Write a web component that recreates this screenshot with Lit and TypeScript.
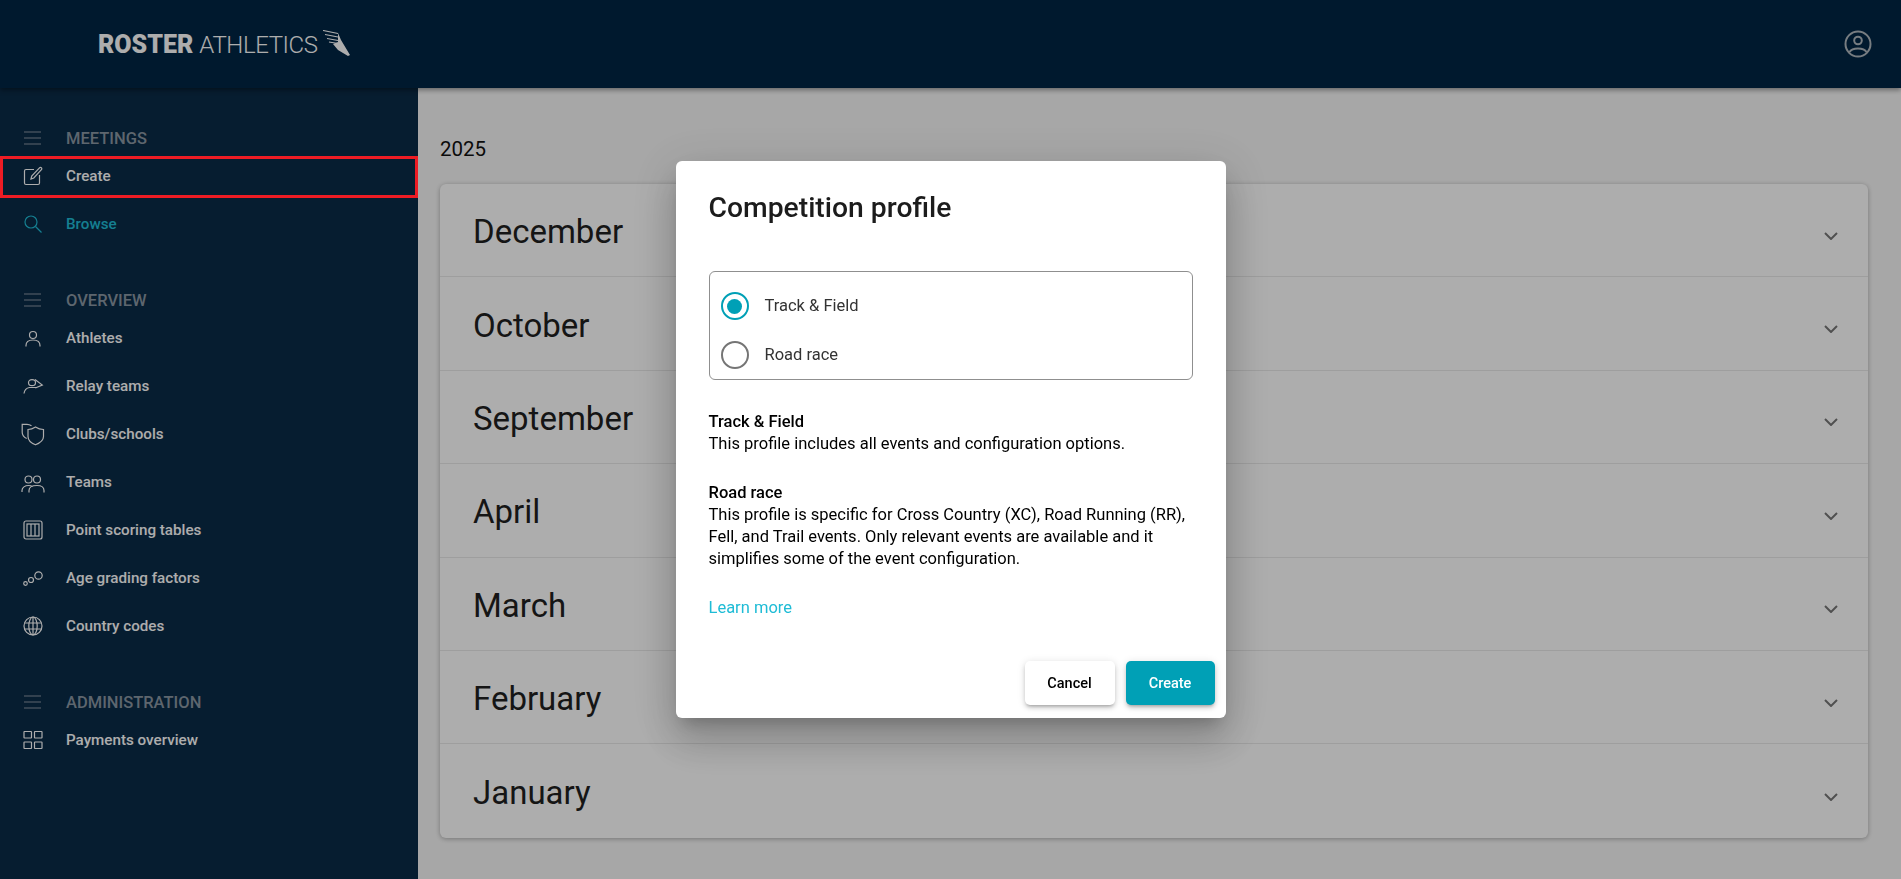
import { LitElement, html, css, svg } from 'lit';
import { customElement } from 'lit/decorators.js';

// nav icons, all on a 20x20 box with a thin stroke
const icons: Record<string, unknown> = {
  menu: svg`<path d="M1 4h17M1 10h17M1 16h17"/>`,
  create: svg`<path d="M11 3.500H3a1.500 1.500 0 0 0-1.500 1.500v12A1.500 1.500 0 0 0 3 18.500h12a1.500 1.500 0 0 0 1.500-1.500V9"/><path d="M8 13l.7-3L16.500 1.800a1.300 1.300 0 0 1 1.900 0 1.300 1.300 0 0 1 0 1.900L10.800 12z"/>`,
  search: svg`<circle cx="8" cy="8" r="6"/><path d="M12.500 12.500l6 6"/>`,
  athlete: svg`<circle cx="10" cy="7" r="3.500"/><path d="M3 18.500v-1c0-3.500 3-5.500 7-5.500s7 2 7 5.500v1"/>`,
  relay: svg`<ellipse cx="9" cy="6.700" rx="3.500" ry="3"/><path d="M12 3.500l7.300 5.500-7 3"/><path d="M1 17.500c.5-3.500 2.500-5.500 5.500-6h7"/>`,
  clubs: svg`<path d="M8.500 1.800C7 .8 5.500.3 4 .3H-.8v8c0 3 1.700 5 4.500 6.200"/><path d="M5 5.500c3 0 5-.8 7.500-2.500 2.500 1.700 4.500 2.500 8 2.500v7c0 3.500-3 6.300-8 8.300-5-2-7.500-4.800-7.500-8.300z"/>`,
  teams: svg`<circle cx="5.500" cy="7.500" r="3.500"/><circle cx="14" cy="7.500" r="3.500"/><path d="M-1 20v-1.500C-1 15.500 2 13.500 5.500 13.500c1.500 0 3 .3 4 1"/><path d="M6 20.500V18.500c0-3 3-5 8-5s7 2 7 5v2"/>`,
  scoring: svg`<rect x="1" y="1" width="18" height="18" rx="2"/><rect x="4" y="4" width="12" height="12"/><path d="M8 4v12M12 4v12"/>`,
  age: svg`<circle cx="2.500" cy="15.500" r="1.800"/><circle cx="8" cy="12" r="2.500"/><circle cx="15.500" cy="7.500" r="3.700"/>`,
  globe: svg`<circle cx="10" cy="10" r="9"/><ellipse cx="10" cy="10" rx="4.200" ry="9"/><path d="M10 1v18M1.500 7h17M1.500 13h17"/>`,
  payments: svg`<rect x="1" y="1.500" width="7.500" height="6.500" rx=".5"/><rect x="11.500" y="1.500" width="7.500" height="6.500" rx=".5"/><rect x="1" y="12" width="7.500" height="6.500" rx=".5"/><rect x="11.500" y="12" width="7.500" height="6.500" rx=".5"/>`,
};

const sections = [
  {
    title: 'MEETINGS',
    items: [
      { icon: 'create', label: 'Create' },
      { icon: 'search', label: 'Browse', active: true },
    ],
  },
  {
    title: 'OVERVIEW',
    items: [
      { icon: 'athlete', label: 'Athletes' },
      { icon: 'relay', label: 'Relay teams' },
      { icon: 'clubs', label: 'Clubs/schools' },
      { icon: 'teams', label: 'Teams' },
      { icon: 'scoring', label: 'Point scoring tables' },
      { icon: 'age', label: 'Age grading factors' },
      { icon: 'globe', label: 'Country codes' },
    ],
  },
  {
    title: 'ADMINISTRATION',
    items: [{ icon: 'payments', label: 'Payments overview' }],
  },
];

const months = ['December', 'October', 'September', 'April', 'March', 'February', 'January'];

@customElement('app-root')
export class AppRoot extends LitElement {
  static styles = css`
    :host {
      display: block;
      height: 100vh;
      overflow: hidden;
      font-family: Roboto, "Liberation Sans", sans-serif;
    }
    .page {
      height: 100%;
      display: flex;
      flex-direction: column;
      background: #f7f7f7;
    }
    .topbar {
      flex: 0 0 88px;
      display: flex;
      align-items: center;
      justify-content: space-between;
      padding: 0 29px 0 98px;
      background: #002544;
      box-shadow: 0 2px 5px rgba(0, 0, 0, 0.4);
      position: relative;
      z-index: 1;
    }
    .logo {
      display: flex;
      align-items: center;
      color: #fff;
      line-height: 28px;
    }
    .logo b {
      font-size: 25px;
      font-weight: 900;
      margin: 2px 6px 0 0;
    }
    .logo span {
      font-size: 24px;
      font-weight: 300;
      letter-spacing: -0.4px;
      margin-top: 2px;
    }
    .logo svg {
      width: 28px;
      height: 28px;
      margin-left: 5px;
      fill: #fff;
      stroke: #fff;
      stroke-width: 1.200;
    }
    .user {
      width: 28px;
      height: 28px;
      fill: none;
      stroke: #b0b8bf;
      stroke-width: 2;
    }
    .body {
      flex: 1;
      display: flex;
      min-height: 0;
    }
    .side {
      flex: 0 0 418px;
      background: #0a2b47;
      padding-top: 38px;
      display: flex;
      flex-direction: column;
      gap: 40px;
    }
    .head,
    .item {
      display: flex;
      align-items: center;
      gap: 23px;
      padding-left: 23px;
    }
    .head {
      height: 24px;
      margin-bottom: 2px;
      font-size: 16.500px;
      font-weight: 500;
      color: #8a97a3;
    }
    .item {
      height: 48px;
      font-size: 15.200px;
      font-weight: 500;
      color: #fff;
    }
    .item.active {
      color: #1fbcd6;
    }
    .ico {
      flex: 0 0 20px;
      width: 20px;
      height: 20px;
      overflow: visible;
      fill: none;
      stroke: currentColor;
      stroke-width: 1.200;
    }
    .main {
      flex: 1;
      padding: 49px 33px 0 22px;
      min-width: 0;
    }
    .year {
      font-size: 20.500px;
      line-height: 24px;
      color: #111;
      margin-bottom: 23px;
    }
    .months {
      background: #fff;
      border-radius: 6px;
      box-shadow: 0 1px 5px rgba(0, 0, 0, 0.3);
    }
    .month {
      height: 93.400px;
      box-sizing: border-box;
      display: flex;
      align-items: center;
      justify-content: space-between;
      padding: 3px 30px 0 33px;
      font-size: 33px;
      color: #1f1f1f;
      border-bottom: 1px solid #e9e9e9;
    }
    .month:last-child {
      border-bottom: 0;
    }
    .month svg {
      width: 14px;
      height: 8px;
      margin-top: 8px;
      fill: none;
      stroke: #777;
      stroke-width: 2;
    }
    .overlay {
      position: fixed;
      inset: 0;
      z-index: 2;
      display: flex;
      align-items: center;
      justify-content: center;
      background: rgba(0, 0, 0, 0.32);
    }
    .dialog {
      width: 550px;
      height: 557px;
      box-sizing: border-box;
      padding: 30px 11px 13px 33px;
      display: flex;
      flex-direction: column;
      background: #fff;
      border-radius: 6px;
      box-shadow: 0 11px 15px -7px rgba(0, 0, 0, 0.2), 0 24px 38px 3px rgba(0, 0, 0, 0.14), 0 9px 46px 8px rgba(0, 0, 0, 0.12);
      color: #000;
      font-size: 16.500px;
      line-height: 22px;
    }
    h2 {
      margin: 0 0 46px;
      font-size: 28.300px;
      line-height: 34px;
      font-weight: 500;
      color: #1c1c1c;
    }
    .choices {
      width: 484px;
      height: 109px;
      box-sizing: border-box;
      margin: 0 0 31px 0;
      padding: 10px 11px 0;
      border: 1px solid #8f8f8f;
      border-radius: 6px;
      display: flex;
      flex-direction: column;
    }
    .choice {
      height: 49px;
      display: flex;
      align-items: center;
      gap: 16px;
      color: #333;
    }
    .radio {
      width: 28px;
      height: 28px;
      box-sizing: border-box;
      border: 2px solid #757575;
      border-radius: 50%;
      display: flex;
      align-items: center;
      justify-content: center;
    }
    .radio.on {
      border-color: #00a0b6;
    }
    .radio.on::after {
      content: '';
      width: 15px;
      height: 15px;
      border-radius: 50%;
      background: #00a0b6;
    }
    .info {
      width: 490px;
      margin: 0 0 27px;
    }
    .info strong {
      display: block;
      font-weight: 500;
    }
    .learn {
      color: #1fbcd6;
      text-decoration: none;
    }
    .actions {
      margin-top: auto;
      display: flex;
      justify-content: flex-end;
      gap: 11px;
    }
    button {
      height: 44px;
      border: 0;
      border-radius: 5px;
      font: 500 14.500px Roboto, "Liberation Sans", sans-serif;
      box-shadow: 0 3px 3px -2px rgba(0, 0, 0, 0.2), 0 3px 4px rgba(0, 0, 0, 0.14), 0 1px 8px rgba(0, 0, 0, 0.12);
    }
    .cancel {
      width: 90px;
      background: #fff;
      color: #000;
    }
    .ok {
      width: 89px;
      background: #00a0b6;
      color: #fff;
    }
    /* red annotation box lying over the Create row, above the dim layer */
    .mark {
      position: fixed;
      left: 0;
      top: 156px;
      width: 418px;
      height: 42px;
      box-sizing: border-box;
      border: 3px solid #ed1c24;
      z-index: 3;
    }
  `;

  private icon(name: string) {
    return html`<svg class="ico" viewBox="0 0 20 20">${icons[name]}</svg>`;
  }

  render() {
    return html`
      <div class="page">
        <header class="topbar">
          <div class="logo">
            <b>ROSTER</b><span>ATHLETICS</span>
            <svg viewBox="0 0 28 28">
              <path d="M0 .5l15 3M2 4.500l13 2.500M4 8.500l11 2M6 12l9 1.500" fill="none" />
              <path d="M15 3l3 7 9 15-2 1-10-6-5-6 5-2z" stroke="none" />
            </svg>
          </div>
          <svg class="user" viewBox="0 0 28 28">
            <circle cx="14" cy="14" r="12.500" />
            <circle cx="14" cy="10.500" r="3.800" />
            <path d="M5.500 22c1.500-2.500 5-3.500 8.500-3.500s7 1 8.500 3.500" />
          </svg>
        </header>
        <div class="body">
          <nav class="side">
            ${sections.map(
              (s) => html`
                <section>
                  <div class="head">${this.icon('menu')}${s.title}</div>
                  ${s.items.map(
                    (i) => html`<div class="item ${i.active ? 'active' : ''}">${this.icon(i.icon)}${i.label}</div>`
                  )}
                </section>
              `
            )}
          </nav>
          <main class="main">
            <div class="year">2025</div>
            <div class="months">
              ${months.map(
                (m) => html`
                  <div class="month">
                    ${m}
                    <svg viewBox="0 0 14 8"><path d="M1 1l6 6 6-6" /></svg>
                  </div>
                `
              )}
            </div>
          </main>
        </div>
      </div>
      <div class="overlay">
        <div class="dialog">
          <h2>Competition profile</h2>
          <div class="choices">
            <label class="choice"><span class="radio on"></span>Track &amp; Field</label>
            <label class="choice"><span class="radio"></span>Road race</label>
          </div>
          <p class="info">
            <strong>Track &amp; Field</strong>
            This profile includes all events and configuration options.
          </p>
          <p class="info">
            <strong>Road race</strong>
            This profile is specific for Cross Country (XC), Road Running (RR),<br />
            Fell, and Trail events. Only relevant events are available and it<br />
            simplifies some of the event configuration.
          </p>
          <a class="learn" href="#">Learn more</a>
          <div class="actions">
            <button class="cancel">Cancel</button>
            <button class="ok">Create</button>
          </div>
        </div>
      </div>
      <div class="mark"></div>
    `;
  }
}
